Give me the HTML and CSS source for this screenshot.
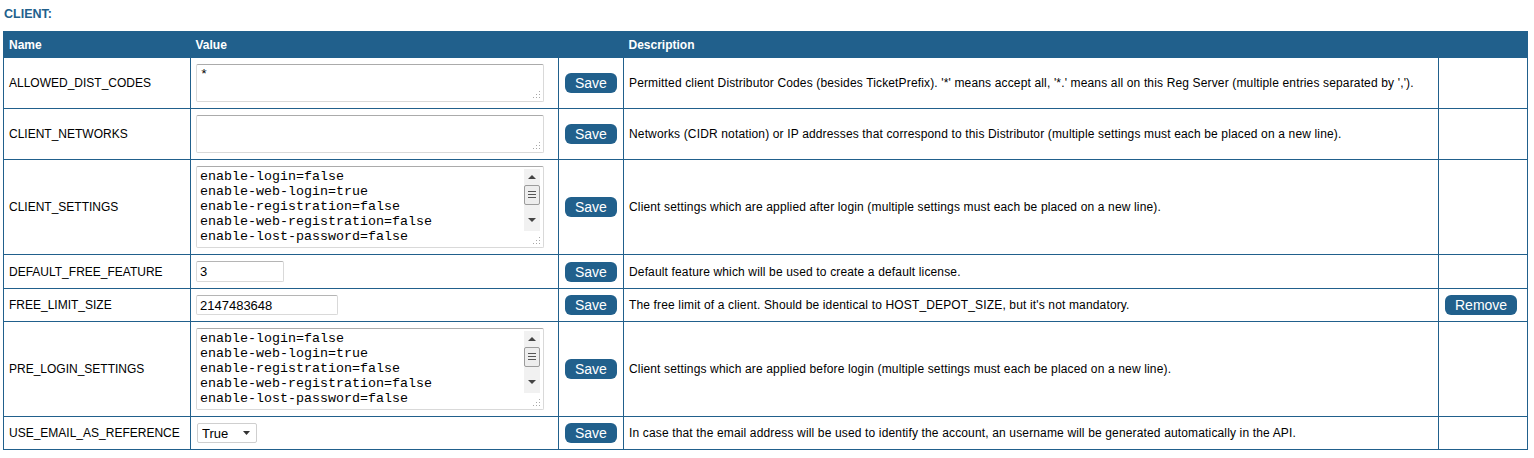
FILE: index.html
```html
<!DOCTYPE html>
<html lang="en">
<head>
    <meta charset="UTF-8">
    <meta name="viewport" content="width=device-width, initial-scale=1.0">
    <title>Client settings</title>
    <link rel="stylesheet" href="styles.css">
</head>
<body>
    <h3 class="section-title">CLIENT:</h3>
    <table class="settings">
        <colgroup>
            <col class="col-name">
            <col class="col-value">
            <col class="col-save">
            <col class="col-desc">
            <col class="col-extra">
        </colgroup>
        <thead>
            <tr>
                <th>Name</th>
                <th>Value</th>
                <th></th>
                <th>Description</th>
                <th></th>
            </tr>
        </thead>
        <tbody>
            <tr>
                <td>ALLOWED_DIST_CODES</td>
                <td>
                    <div class="area-wrap">
                        <textarea class="val-area short">*</textarea>
                        <span class="grip"></span>
                    </div>
                </td>
                <td><button class="btn">Save</button></td>
                <td class="desc">Permitted client Distributor Codes (besides TicketPrefix). '*' means accept all, '*.' means all on this Reg Server (multiple entries separated by ',').</td>
                <td></td>
            </tr>
            <tr>
                <td>CLIENT_NETWORKS</td>
                <td>
                    <div class="area-wrap">
                        <textarea class="val-area short"></textarea>
                        <span class="grip"></span>
                    </div>
                </td>
                <td><button class="btn">Save</button></td>
                <td class="desc">Networks (CIDR notation) or IP addresses that correspond to this Distributor (multiple settings must each be placed on a new line).</td>
                <td></td>
            </tr>
            <tr>
                <td>CLIENT_SETTINGS</td>
                <td>
                    <div class="area-wrap">
                        <textarea class="val-area tall">enable-login=false
enable-web-login=true
enable-registration=false
enable-web-registration=false
enable-lost-password=false</textarea>
                        <div class="fake-scroll">
                            <span class="arrow up"></span>
                            <span class="thumb"></span>
                            <span class="arrow down"></span>
                        </div>
                        <span class="grip"></span>
                    </div>
                </td>
                <td><button class="btn">Save</button></td>
                <td class="desc">Client settings which are applied after login (multiple settings must each be placed on a new line).</td>
                <td></td>
            </tr>
            <tr>
                <td>DEFAULT_FREE_FEATURE</td>
                <td><input class="val-input small" type="text" value="3"></td>
                <td><button class="btn">Save</button></td>
                <td class="desc">Default feature which will be used to create a default license.</td>
                <td></td>
            </tr>
            <tr>
                <td>FREE_LIMIT_SIZE</td>
                <td><input class="val-input medium" type="text" value="2147483648"></td>
                <td><button class="btn">Save</button></td>
                <td class="desc">The free limit of a client. Should be identical to HOST_DEPOT_SIZE, but it's not mandatory.</td>
                <td><button class="btn">Remove</button></td>
            </tr>
            <tr>
                <td>PRE_LOGIN_SETTINGS</td>
                <td>
                    <div class="area-wrap">
                        <textarea class="val-area tall">enable-login=false
enable-web-login=true
enable-registration=false
enable-web-registration=false
enable-lost-password=false</textarea>
                        <div class="fake-scroll">
                            <span class="arrow up"></span>
                            <span class="thumb"></span>
                            <span class="arrow down"></span>
                        </div>
                        <span class="grip"></span>
                    </div>
                </td>
                <td><button class="btn">Save</button></td>
                <td class="desc">Client settings which are applied before login (multiple settings must each be placed on a new line).</td>
                <td></td>
            </tr>
            <tr>
                <td>USE_EMAIL_AS_REFERENCE</td>
                <td>
                    <select class="val-select">
                        <option selected>True</option>
                        <option>False</option>
                    </select>
                </td>
                <td><button class="btn">Save</button></td>
                <td class="desc">In case that the email address will be used to identify the account, an username will be generated automatically in the API.</td>
                <td></td>
            </tr>
        </tbody>
    </table>
</body>
</html>
```

FILE: styles.css
```css
body {
    font-family: 'Liberation Sans', Arial, sans-serif;
    font-size: 12px;
    color: #000;
    background-color: #ffffff;
    margin: 0;
    padding: 0 3px;
}
.section-title {
    color: #21608c;
    font-size: 12.5px;
    font-weight: bold;
    margin: 7px 0 10px 1px;
    line-height: 14px;
}
.settings {
    width: 1524px;
    table-layout: fixed;
    border-collapse: collapse;
    border: 1px solid #21608c;
}
.col-name { width: 187px; }
.col-value { width: 368px; }
.col-save { width: 65px; }
.col-desc { width: 815px; }
.col-extra { width: 89px; }
.settings th {
    background-color: #21608c;
    color: #ffffff;
    text-align: left;
    font-weight: bold;
    padding: 6px 5px 5px;
    line-height: 14px;
}
.settings td {
    border: 1px solid #21608c;
    padding: 6px 5px;
    vertical-align: middle;
    line-height: 14px;
}
.settings td.desc {
    letter-spacing: 0.15px;
}
.btn {
    background-color: #21608c;
    color: #ffffff;
    border: none;
    border-radius: 6px;
    font-family: 'Liberation Sans', Arial, sans-serif;
    font-size: 14px;
    height: 20px;
    padding: 0 10px;
    line-height: 20px;
    cursor: pointer;
    display: block;
    margin-left: 1px;
}
.btn:hover {
    background-color: #1a4d72;
}
.area-wrap {
    position: relative;
    width: 348px;
}
.val-area {
    display: block;
    box-sizing: border-box;
    width: 348px;
    margin: 0;
    padding: 2px 22px 2px 3px;
    border: 1px solid #d9d9d9;
    border-top-color: #ababab;
    border-radius: 2px;
    font-family: 'Liberation Mono', 'Courier New', monospace;
    font-size: 13.33px;
    line-height: 15px;
    color: #000;
    resize: none;
    overflow: hidden;
}
.val-area.short {
    height: 38px;
}
.val-area.tall {
    height: 82px;
}
.grip {
    position: absolute;
    right: 4px;
    bottom: 4px;
    width: 1px;
    height: 1px;
    background-color: #a8a8a8;
    box-shadow: -3px 0 #a8a8a8, -6px 0 #a8a8a8, 0 -3px #a8a8a8, -3px -3px #a8a8a8, 0 -6px #a8a8a8;
}
.fake-scroll {
    position: absolute;
    top: 3px;
    right: 4px;
    width: 16px;
    height: 62px;
    background-color: #f1f1f1;
}
.arrow {
    position: absolute;
    left: 4px;
    width: 0;
    height: 0;
    border-left: 4px solid transparent;
    border-right: 4px solid transparent;
}
.arrow.up {
    top: 6px;
    border-bottom: 4px solid #444;
}
.arrow.down {
    bottom: 9px;
    border-top: 4px solid #444;
}
.thumb {
    position: absolute;
    top: 16px;
    left: 0;
    width: 16px;
    height: 20px;
    box-sizing: border-box;
    border: 1px solid #9c9c9c;
    border-radius: 2px;
    background-color: #ededed;
    background-image:
        linear-gradient(#555, #555),
        linear-gradient(#555, #555),
        linear-gradient(#555, #555);
    background-size: 8px 1px;
    background-repeat: no-repeat;
    background-position: 50% 5px, 50% 8px, 50% 11px;
}
.val-input {
    display: block;
    box-sizing: border-box;
    height: 21px;
    margin: 0;
    padding: 1px 3px;
    border: 1px solid #d9d9d9;
    border-top-color: #b5b5b5;
    border-radius: 2px;
    font-family: 'Liberation Sans', Arial, sans-serif;
    font-size: 13px;
    color: #000;
}
.val-input.small { width: 88px; }
.val-input.medium {
    width: 142px;
    height: 20px;
}
.val-select {
    display: block;
    box-sizing: border-box;
    width: 60px;
    height: 20px;
    margin: 0 0 0 1px;
    padding: 0 0 0 4px;
    border: 1px solid #cfcfcf;
    border-radius: 2px;
    background-color: #ffffff;
    background-image: url("data:image/svg+xml;utf8,<svg xmlns='http://www.w3.org/2000/svg' width='7' height='4'><path d='M0 0L3.5 4L7 0z' fill='%23333'/></svg>");
    background-repeat: no-repeat;
    background-position: right 6px center;
    appearance: none;
    -webkit-appearance: none;
    font-family: 'Liberation Sans', Arial, sans-serif;
    font-size: 13px;
    color: #000;
}
```
